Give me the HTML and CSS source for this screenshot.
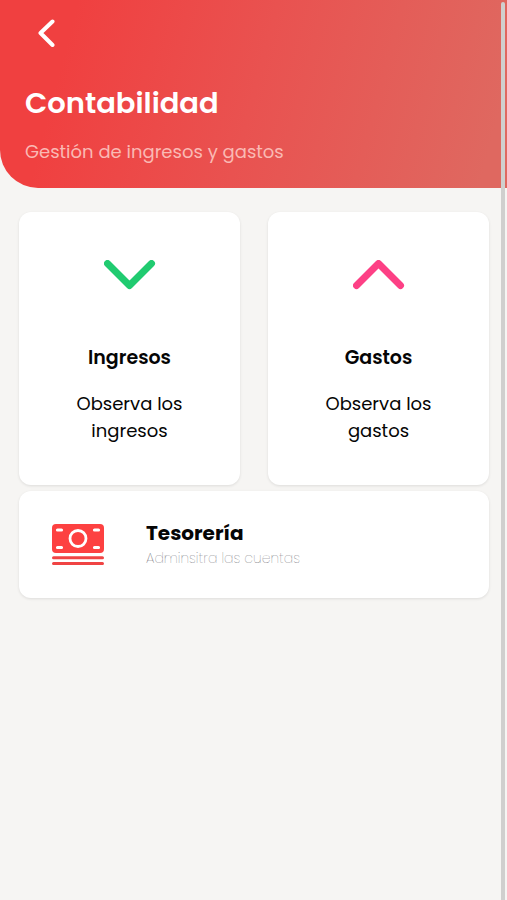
FILE: index.html
```
<!DOCTYPE html>
<html lang="es">
<head>
<meta charset="utf-8">
<meta name="viewport" content="width=device-width, initial-scale=1">
<title>Contabilidad</title>
<link rel="stylesheet" href="styles.css">
</head>
<body>
<header class="hero">
  <button class="back" type="button" aria-label="Volver">
    <svg width="18" height="28" viewBox="0 0 18 28"><path d="M15.500 2.500 3.500 14l12 12"/></svg>
  </button>
  <h1 class="title">Contabilidad</h1>
  <p class="subtitle">Gestión de ingresos y gastos</p>
</header>
<main class="menu">
  <a class="card income" href="#ingresos">
    <svg class="arrow" width="52" height="30" viewBox="0 0 52 30"><path d="m3.500 3.500 22 22 22-22"/></svg>
    <h2 class="name">Ingresos</h2>
    <p class="text">Observa los ingresos</p>
  </a>
  <a class="card expense" href="#gastos">
    <svg class="arrow" width="52" height="30" viewBox="0 0 52 30"><path d="m3.500 25.500 22-22 22 22"/></svg>
    <h2 class="name">Gastos</h2>
    <p class="text">Observa los gastos</p>
  </a>
  <a class="card treasury" href="#tesoreria">
    <svg width="52" height="42" viewBox="0 0 52 42">
      <rect width="52" height="29" rx="4" fill="#fd4141"/>
      <circle cx="26" cy="14.500" r="8" fill="none" stroke="#fff" stroke-width="2.800"/>
      <path d="M5.500 6h4M42.500 6h4M5.500 23.500h4M42.500 23.500h4" stroke="#fff" stroke-width="3.200" stroke-linecap="round"/>
      <path d="M1.500 33.800h49M1.500 39.400h49" stroke="#f04444" stroke-width="3" stroke-linecap="round"/>
    </svg>
    <div>
      <h2 class="name">Tesorería</h2>
      <p class="note">Adminsitra las cuentas</p>
    </div>
  </a>
</main>
<div class="scrollbar" aria-hidden="true"></div>
</body>
</html>
```
FILE: styles.css
```
* {
  box-sizing: border-box;
}

body {
  margin: 0;
  min-height: 100vh;
  background: #f6f5f3;
  color: #050505;
  font-family: Poppins, Inter, sans-serif;
}

h1,
h2,
p {
  margin: 0;
}

svg {
  display: block;
}

.hero {
  padding: 19px 25px 24px;
  border-bottom-left-radius: 38px;
  background: linear-gradient(105deg, #f04040 14%, #e95250 50%, #df6860 95%);
  color: #fff;
}

.back {
  display: block;
  margin: 0 0 36px 12px;
  padding: 0;
  border: 0;
  background: none;
}

.back path {
  fill: none;
  stroke: #fff;
  stroke-width: 4;
  stroke-linecap: round;
  stroke-linejoin: round;
}

.title {
  font-size: 29px;
  font-weight: 600;
  line-height: 40px;
}

.subtitle {
  margin-top: 16px;
  color: #fab9b4;
  font-size: 18px;
  line-height: 25px;
}

.menu {
  display: grid;
  grid-template-columns: 1fr 1fr;
  gap: 6px 28px;
  padding: 24px 18px 24px 19px;
}

.card {
  border-radius: 12px;
  background: #fff;
  box-shadow: 0 1px 3px rgba(0, 0, 0, 0.1);
  color: inherit;
  text-decoration: none;
}

.income,
.expense {
  display: flex;
  flex-direction: column;
  align-items: center;
  padding: 48px 48px 41px;
  text-align: center;
}

.arrow {
  margin-bottom: 54px;
  fill: none;
  stroke-width: 7;
  stroke-linecap: round;
  stroke-linejoin: round;
}

.income .arrow {
  stroke: #20cb70;
}

.expense .arrow {
  stroke: #fd4085;
}

.name {
  font-size: 19px;
  font-weight: 600;
  line-height: 28px;
}

.text {
  margin-top: 18px;
  font-size: 18px;
  line-height: 27px;
}

.treasury {
  grid-column: 1 / -1;
  display: flex;
  align-items: center;
  gap: 42px;
  padding: 28px 33px;
}

.treasury .name {
  font-size: 20px;
  font-weight: 700;
}

.note {
  color: #606068;
  font-size: 14px;
  font-weight: 200;
  line-height: 23px;
}

.scrollbar {
  position: fixed;
  top: 2px;
  right: 2px;
  bottom: 0;
  width: 4px;
  border-radius: 2px 2px 0 0;
  background: #d0cfce;
}
```
